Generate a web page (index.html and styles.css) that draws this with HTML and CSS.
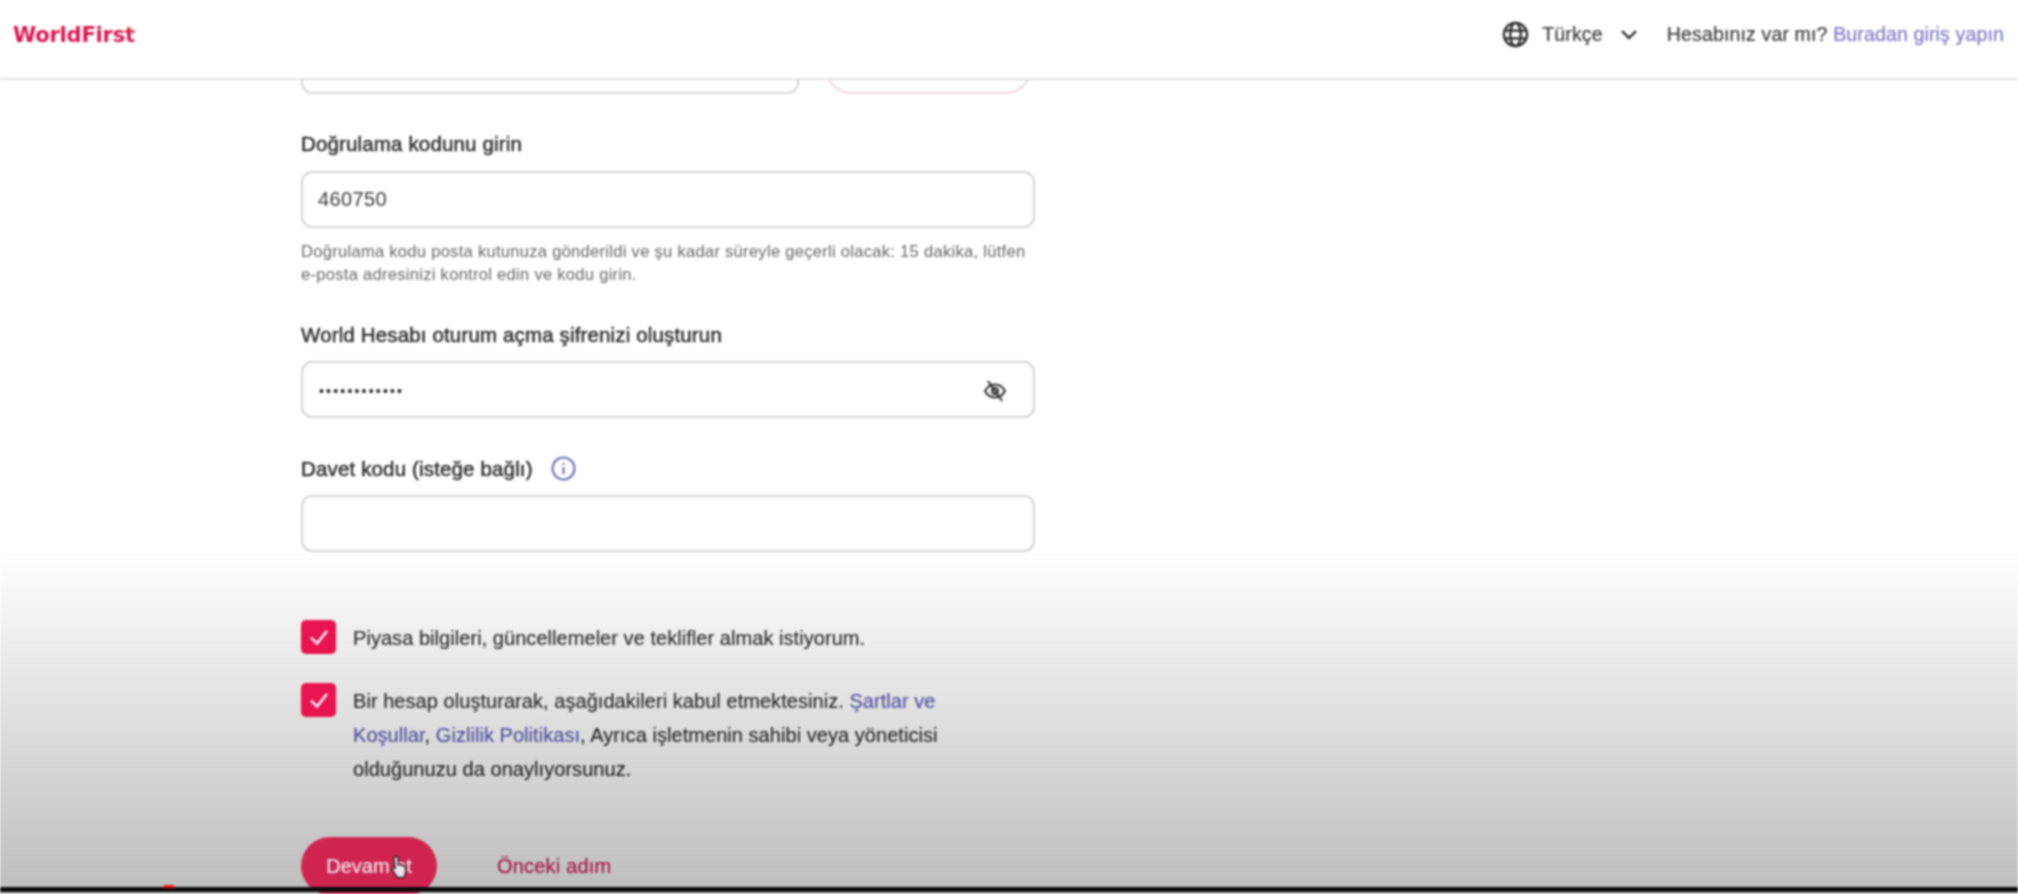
FILE: index.html
```html
<!DOCTYPE html>
<html lang="tr">
<head>
<meta charset="utf-8">
<title>WorldFirst</title>
<link rel="stylesheet" href="styles.css">
</head>
<body>
<div class="page">
  <header class="topbar">
    <a class="logo">WorldFirs<span class="logo-t">t</span></a>
    <div class="top-right">
      <svg class="globe" viewBox="0 0 28 28" fill="none" stroke="#2b2b2b" stroke-width="2.4"><circle cx="14" cy="14" r="12"/><ellipse cx="14" cy="14" rx="5.5" ry="12"/><path d="M3 10h22M3 18h22"/></svg>
      <span class="lang">Türkçe</span>
      <svg class="chev" viewBox="0 0 18 12" fill="none" stroke="#2b2b2b" stroke-width="2.4"><path d="M2 2l7 7 7-7"/></svg>
      <span class="account">Hesabınız var mı? <a class="link-top">Buradan giriş yapın</a></span>
    </div>
  </header>
  <main class="form">
    <div class="email-row">
      <div class="box email-box"></div>
      <div class="send-btn"></div>
    </div>
    <label class="label first">Doğrulama kodunu girin</label>
    <div class="box"><input class="input" type="text" value="460750"></div>
    <p class="hint">Doğrulama kodu posta kutunuza gönderildi ve şu kadar süreyle geçerli olacak: 15 dakika, lütfen <span class="nowrap">e-posta</span> adresinizi kontrol edin ve kodu girin.</p>
    <label class="label second">World Hesabı oturum açma şifrenizi oluşturun</label>
    <div class="box">
      <input class="input pass" type="password" value="abcdefghijkl">
      <svg class="eye" viewBox="0 0 24 24" fill="none" stroke="#2b2b2b" stroke-width="2"><path d="M2 12c2.500-4.500 5.800-6.500 10-6.500s7.500 2 10 6.500c-2.500 4.500-5.800 6.500-10 6.500S4.500 16.500 2 12z"/><circle cx="12" cy="12" r="3"/><path d="M5 2l14 20"/></svg>
    </div>
    <div class="label third">Davet kodu (isteğe bağlı)
      <svg class="info" viewBox="0 0 24 24" fill="none" stroke="#6a70b8" stroke-width="2"><circle cx="12" cy="12" r="10.500"/><path d="M12 10.500v7M12 6.500v2"/></svg>
    </div>
    <div class="box"><input class="input" type="text"></div>
    <div class="check-row one">
      <span class="check"><svg viewBox="0 0 24 24" fill="none" stroke="#fff" stroke-width="2.400"><path d="M4 12.500l6 6L20 6"/></svg></span>
      <span class="check-text">Piyasa bilgileri, güncellemeler ve teklifler almak istiyorum.</span>
    </div>
    <div class="check-row two">
      <span class="check"><svg viewBox="0 0 24 24" fill="none" stroke="#fff" stroke-width="2.400"><path d="M4 12.500l6 6L20 6"/></svg></span>
      <span class="check-text">Bir hesap oluşturarak, aşağıdakileri kabul etmektesiniz. <a class="link">Şartlar ve</a> <a class="link">Koşullar</a>, <a class="link">Gizlilik Politikası</a>, Ayrıca işletmenin sahibi veya yöneticisi olduğunuzu da onaylıyorsunuz.</span>
    </div>
    <div class="actions">
      <button class="primary">Devam et</button>
      <a class="back">Önceki adım</a>
    </div>
  </main>
  <div class="shade"></div>
  <svg class="cursor" viewBox="0 0 18 24"><path d="M5 1.500c1.200 0 2 .8 2 2V10l1-.3c.8-.2 1.500 0 2 .6.800-.3 1.600-.1 2 .5.900-.2 1.800.2 2.200 1 .8 2 .8 5-.2 7.700l-.8 3H6.500L2 15.500c-.8-1.200-.6-2.300.2-2.800.7-.4 1.500-.2 2 .4L3 4c0-1.500.8-2.500 2-2.500z" fill="#e8e8e8" stroke="#222" stroke-width="1.300"/></svg>
  <div class="bar"><span class="progress-dot"></span></div>
</div>
</body>
</html>
```
FILE: styles.css
```css
* { box-sizing: border-box; }
html, body { margin: 0; height: 894px; overflow: hidden; background: #fff; }
body { font-family: "Liberation Sans", Arial, sans-serif; color: #2a2a2a; }
.page { position: relative; height: 894px; overflow: hidden; filter: blur(0.9px); background: #fff; }
.topbar { position: relative; z-index: 2; height: 80px; background: #fff; border-bottom: 2px solid #e4e4e4; display: flex; align-items: center; justify-content: space-between; padding: 0 14px 9px 13px; }
.logo { font-family: "DejaVu Sans", sans-serif; font-weight: 700; font-size: 21px; letter-spacing: -0.2px; color: #d9164f; }
.logo-t { background: linear-gradient(25deg, #d9164f 62%, #f5a030 85%); -webkit-background-clip: text; background-clip: text; color: transparent; }
.top-right { display: flex; align-items: center; font-size: 19.500px; letter-spacing: 0.15px; color: #3a3a3a; -webkit-text-stroke: 0.2px; }
.globe { width: 27px; height: 27px; }
.lang { margin-left: 13px; }
.chev { width: 18px; height: 12px; margin-left: 17px; }
.account { margin-left: 29px; }
.link-top { color: #7d7ac6; }
.form { position: relative; width: 734px; margin: -43px 0 0 301px; }
.email-row { display: flex; gap: 25px; height: 57px; }
.box { height: 57px; border: 2px solid #d5d5d5; border-radius: 11px; background: #fff; display: flex; align-items: center; padding: 0 26px 0 15px; }
.email-box { width: 498px; }
.send-btn { width: 209px; border: 2px solid #edd6de; border-radius: 28px; }
.label { display: block; font-size: 20.500px; letter-spacing: 0.15px; line-height: 24px; color: #2a2a2a; -webkit-text-stroke: 0.45px #2a2a2a; margin-bottom: 15px; }
.label.first { margin-top: 38px; }
.label.second { margin-top: 37px; margin-bottom: 14px; }
.label.third { display: flex; align-items: center; gap: 18px; margin-top: 38px; margin-bottom: 14px; }
.input { flex: 1; border: 0; outline: 0; background: transparent; padding: 0; font: 20px "Liberation Sans", Arial, sans-serif; letter-spacing: 0.4px; color: #3a3a3a; }
.pass { font-size: 14px; letter-spacing: 2.200px; padding-top: 3px; margin-left: 1px; color: #222; }
.eye { width: 24px; height: 24px; margin-top: 2px; }
.info { width: 25px; height: 25px; }
.hint { margin: 12px 0 0; font-size: 16.500px; letter-spacing: 0.3px; line-height: 23px; color: #666; }
.nowrap { white-space: nowrap; }
.check-row { display: flex; align-items: flex-start; gap: 17px; }
.check-row.one { margin-top: 68px; }
.check-row.two { margin-top: 29px; }
.check { position: relative; z-index: 4; flex: none; width: 35px; height: 34px; background: #e8134f; border-radius: 5px; display: flex; align-items: center; justify-content: center; }
.check svg { width: 24px; height: 24px; }
.check-text { width: 606px; margin: 1px 0 -1px; font-size: 20px; letter-spacing: 0.05px; line-height: 34px; color: #2c2c2c; -webkit-text-stroke: 0.15px; }
.link { color: #5a57b0; }
.actions { display: flex; align-items: center; gap: 60px; margin-top: 52px; }
.primary { position: relative; z-index: 4; width: 136px; height: 58px; border: 0; border-radius: 29px; background: #cf2450; color: #f0e4e8; font: 20px "Liberation Sans", Arial, sans-serif; padding: 0; -webkit-text-stroke: 0.2px; }
.back { font-size: 20px; letter-spacing: 0.2px; color: #d41c58; -webkit-text-stroke: 0.2px; }
.shade { position: absolute; z-index: 3; left: 0; right: 0; top: 550px; bottom: 0; pointer-events: none; background: linear-gradient(to bottom, rgba(0,0,0,0), rgba(0,0,0,.26)); }
.cursor { position: absolute; z-index: 5; left: 391px; top: 855px; width: 18px; height: 24px; }
.bar { position: absolute; z-index: 6; left: 0; right: 0; top: 887px; height: 5px; background: #0a0a0a; }
.progress-dot { position: absolute; left: 163px; top: -2px; width: 12px; height: 3px; border-radius: 3px 3px 0 0; background: #f01010; }
```
